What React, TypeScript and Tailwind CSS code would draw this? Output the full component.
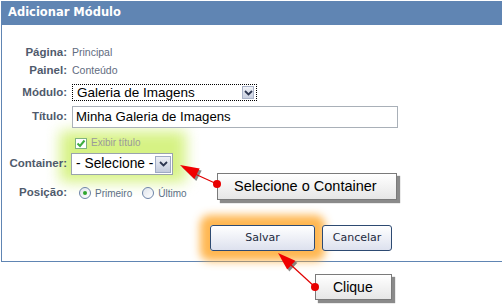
import React from "react";

const sans = { fontFamily: '"Liberation Sans", Arial, sans-serif' };
const verd = { fontFamily: '"DejaVu Sans", Verdana, sans-serif' };

function Chevron() {
  return (
    <svg width="9" height="6" viewBox="0 0 9 6">
      <path d="M1 1 L4.5 4.5 L8 1" fill="none" stroke="#2c3650" strokeWidth="1.8" />
    </svg>
  );
}

function Label({ children }: { children: React.ReactNode }) {
  return (
    <div
      className="w-[65px] shrink-0 text-right text-[11.5px] font-bold text-[#4f5a6c] leading-none"
      style={sans}
    >
      {children}
    </div>
  );
}

function Radio({ checked }: { checked?: boolean }) {
  return (
    <div className="w-[12px] h-[12px] rounded-full border border-[#6d84a8] bg-gradient-to-br from-[#dfe4ec] to-white flex items-center justify-center">
      {checked && <div className="w-[4px] h-[4px] rounded-full bg-[#2fa52f]" />}
    </div>
  );
}

export default function App() {
  return (
    <div className="relative w-[502px] h-[305px] overflow-hidden bg-white">
      {/* glow */}
      <div className="absolute left-[60px] top-[131px] w-[126px] h-[51px] bg-[#d6f284] blur-[7px]" />

      <div className="relative ml-[1px] mt-[1px] h-[261px] border-l border-b border-[#6085b3]">
        <div className="h-[24px] bg-[#6085b3] flex items-center pl-[6px]">
          <span className="text-white font-bold text-[11.5px]" style={verd}>
            Adicionar Módulo
          </span>
        </div>
        <div className="pt-[21px] flex flex-col">
          <div className="h-[14px] flex items-center">
            <Label>Página:</Label>
            <span className="ml-[5px] text-[10.5px] text-[#5f6b80]" style={sans}>Principal</span>
          </div>
          <div className="mt-[4px] h-[14px] flex items-center">
            <Label>Painel:</Label>
            <span className="ml-[5px] text-[10.5px] text-[#5f6b80]" style={sans}>Conteúdo</span>
          </div>
          <div className="mt-[6px] h-[17px] flex items-center">
            <Label>Módulo:</Label>
            <div className="ml-[5px] w-[185px] h-[17px] border border-dotted border-black bg-white flex items-center justify-between pl-[4px] pr-[2px]">
              <span className="text-[13.5px] text-black leading-none" style={sans}>Galeria de Imagens</span>
              <div className="w-[12px] h-[13px] border border-[#aab3c8] bg-gradient-to-b from-[#f1f3f8] to-[#c9d0e0] flex items-center justify-center">
                <Chevron />
              </div>
            </div>
          </div>
          <div className="mt-[5px] h-[22px] flex items-center">
            <Label>Título:</Label>
            <div className="ml-[5px] w-[326px] h-[22px] border border-[#a9b0b8] bg-white flex items-center pl-[3px]">
              <span className="text-[13.2px] text-black leading-none" style={sans}>Minha Galeria de Imagens</span>
            </div>
          </div>
          <div className="relative mt-[8px] h-[14px] flex items-center">
            <div className="w-[65px] shrink-0" />
            <div className="ml-[8px] w-[12px] h-[11px] border border-[#7fb27f] bg-white flex items-center justify-center">
              <svg width="10" height="9" viewBox="0 0 10 9">
                <path d="M1.5 4.5 L4 7 L8.5 1.5" fill="none" stroke="#3fae3f" strokeWidth="2" />
              </svg>
            </div>
            <span className="ml-[4px] text-[10px] text-[#9a9a9a] leading-none" style={sans}>Exibir título</span>
          </div>
          <div className="relative mt-[3px] h-[22px] flex items-center">
            <Label>Container:</Label>
            <div className="ml-[4px] w-[102px] h-[22px] border border-[#9aa3ad] bg-white flex items-center justify-between pl-[4px] pr-[1px]">
              <span className="text-[13.8px] text-black leading-none" style={sans}>- Selecione -</span>
              <div className="w-[16px] h-[17px] border border-[#9eaac4] bg-gradient-to-b from-[#eef0f6] to-[#c3cbdd] flex items-center justify-center">
                <Chevron />
              </div>
            </div>
          </div>
          <div className="mt-[11px] h-[14px] flex items-center">
            <Label>Posição:</Label>
            <div className="ml-[12px] flex items-center">
              <Radio checked />
              <span className="ml-[4px] text-[10px] text-[#5c6f86]" style={sans}>Primeiro</span>
              <div className="ml-[10px]">
                <Radio />
              </div>
              <span className="ml-[4px] text-[10px] text-[#5c6f86]" style={sans}>Último</span>
            </div>
          </div>
          <div className="mt-[25px] h-[26px] flex items-center">
            <div className="ml-[208px] w-[105px] h-[26px] rounded-[3px] border border-[#2d4a72] bg-gradient-to-b from-white to-[#dde1ee] flex items-center justify-center shadow-[0_0_9px_10px_rgba(255,170,50,0.85)]">
              <span className="text-[11px] text-[#1c2a3e]" style={verd}>Salvar</span>
            </div>
            <div className="ml-[7px] w-[70px] h-[26px] rounded-[3px] border border-[#2d4a72] bg-gradient-to-b from-white to-[#dde1ee] flex items-center justify-center">
              <span className="text-[11px] text-[#1c2a3e]" style={verd}>Cancelar</span>
            </div>
          </div>
        </div>
      </div>

      {/* callouts */}
      <div className="absolute left-[217px] top-[173px] w-[180px] h-[27px] border border-[#7a7a7a] bg-gradient-to-b from-white to-[#e6e6e6] shadow-[3px_3px_1px_#8a8a8a] flex items-center pl-[16px]">
        <span className="text-[14.5px] text-black leading-none" style={sans}>Selecione o Container</span>
      </div>
      <div className="absolute left-[315px] top-[274px] w-[77px] h-[26px] border border-[#7a7a7a] bg-gradient-to-b from-white to-[#e6e6e6] shadow-[3px_3px_1px_#8a8a8a] flex items-center pl-[17px]">
        <span className="text-[14px] text-black leading-none" style={sans}>Clique</span>
      </div>

      {/* arrows */}
      <svg className="absolute inset-0 pointer-events-none" width="502" height="305">
        <polygon points="182,167 196.3,181 201.7,170.4" fill="#555" opacity="0.7" />
        <line x1="217" y1="184" x2="195" y2="174" stroke="#e00000" strokeWidth="1.2" />
        <polygon points="180,165 194.3,179 199.7,168.4" fill="#f00000" />
        <circle cx="217" cy="184" r="4" fill="#e80000" />

        <polygon points="280,255 289.2,271.6 297.4,262.8" fill="#555" opacity="0.7" />
        <line x1="315" y1="287" x2="291" y2="265" stroke="#e00000" strokeWidth="1.2" />
        <polygon points="278,253 287.2,269.6 295.4,260.8" fill="#f00000" />
        <circle cx="315" cy="287" r="4" fill="#e80000" />
      </svg>
    </div>
  );
}
